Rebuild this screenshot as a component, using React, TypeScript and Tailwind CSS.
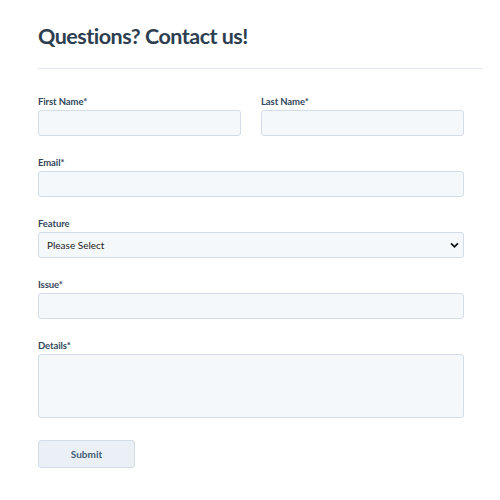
const font = { fontFamily: "Lato, 'Noto Sans', sans-serif" };

function Label({ children }: { children: React.ReactNode }) {
  return (
    <label className="block text-[9.5px] font-bold leading-none tracking-[-0.1px] text-[#33475b] mb-[3.5px]">
      {children}
    </label>
  );
}

const inputCls =
  "block w-full h-[26px] rounded-[3px] border border-[#d3dde8] bg-[#f5f8fa] px-2 text-[9.5px] text-[#33475b] outline-none";

export default function App() {
  return (
    <div className="w-[500px] h-[500px] bg-white pl-[38px] pr-[17px] pt-[26px]" style={font}>
      <h1 className="text-[21.5px] font-bold leading-none text-[#2d3e50] tracking-[-0.5px]">Questions? Contact us!</h1>
      <div className="mt-[20.5px] h-px bg-[#e3e8ef]" />
      <form className="w-[426px] mt-[28px] flex flex-col gap-[22px]">
        <div className="flex gap-[20px]">
          <div className="flex-1">
            <Label>First Name*</Label>
            <input className={inputCls} />
          </div>
          <div className="flex-1">
            <Label>Last Name*</Label>
            <input className={inputCls} />
          </div>
        </div>
        <div>
          <Label>Email*</Label>
          <input className={inputCls} />
        </div>
        <div>
          <Label>Feature</Label>
          <div className="relative">
            <select className={inputCls + " appearance-none !text-[#222] !text-[10px]"}>
              <option>Please Select</option>
            </select>
            <svg className="absolute right-[5px] top-[10px] w-[9px] h-[7px]" viewBox="0 0 10 7">
              <path d="M1.2 1.2 L5 5 L8.8 1.2" stroke="#111" strokeWidth="2" fill="none" />
            </svg>
          </div>
        </div>
        <div>
          <Label>Issue*</Label>
          <input className={inputCls} />
        </div>
        <div>
          <Label>Details*</Label>
          <textarea className={inputCls + " h-[64px] resize-none"} />
        </div>
        <button
          type="button"
          className="w-[97px] h-[28px] rounded-[3px] border border-[#d3dde8] bg-[#eaf0f6] text-[10px] font-bold text-[#425b76]"
        >
          Submit
        </button>
      </form>
    </div>
  );
}
